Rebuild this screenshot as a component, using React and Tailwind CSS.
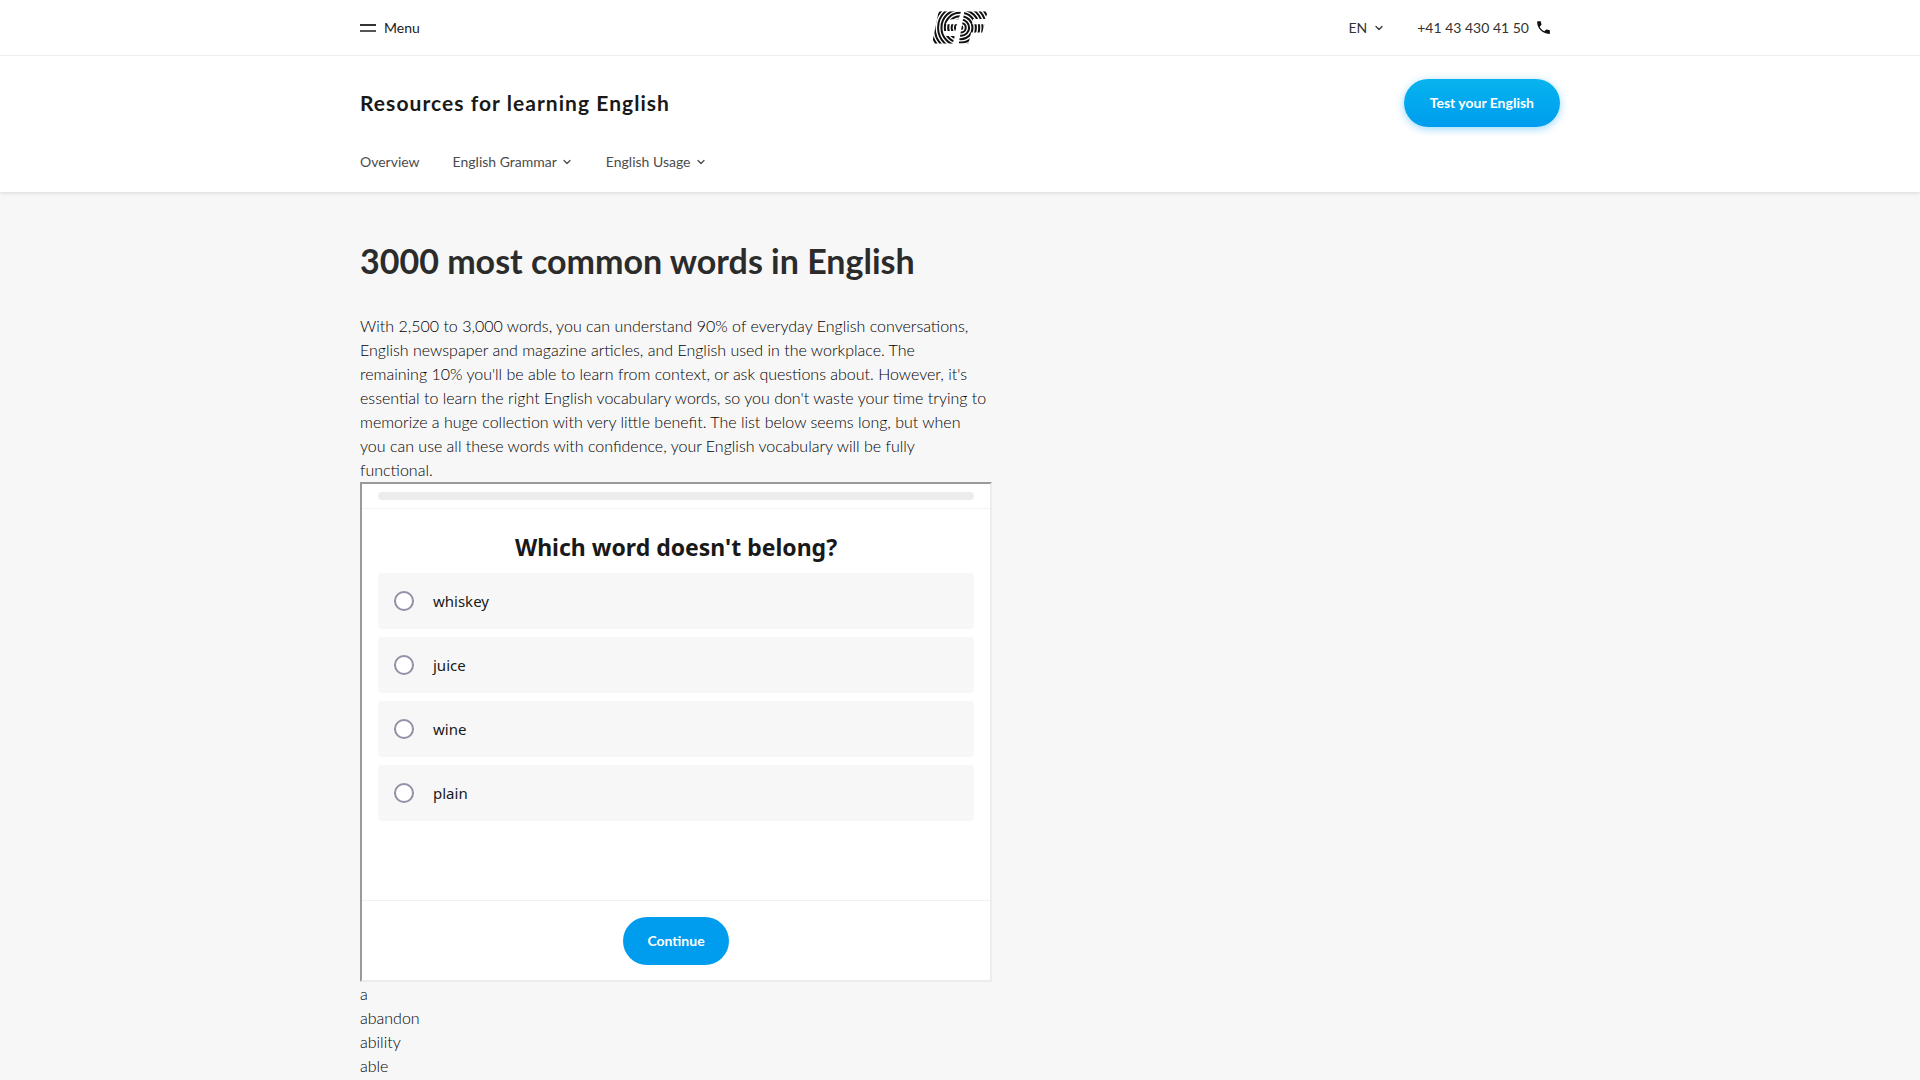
import { ChevronDown } from "lucide-react";
import { MdPhone } from "react-icons/md";

const OPTIONS = ["whiskey", "juice", "wine", "plain"];
const WORDS = ["a", "abandon", "ability", "able"];
const RINGS = [4, 14, 24, 34, 44, 54, 64, 74, 84];

function Logo() {
  return (
    <svg viewBox="38 33 166 97" className="h-[33px] w-[56px]" aria-hidden="true">
      <defs>
        <clipPath id="letter-e">
          <path d="M58 33H124L117 57H100Q84 57 79 72H113L107 92H73Q70 107 82 107H106L99 130H38Z" />
        </clipPath>
        <clipPath id="letter-f">
          <path d="M134 33H204L196 56H160L157 72H194L187 96H154L146 130H117Z" />
        </clipPath>
      </defs>
      <g fill="none" stroke="#111" strokeWidth="6">
        <g clipPath="url(#letter-e)">
          {RINGS.map((r) => (
            <circle key={r} cx="120" cy="82" r={r} />
          ))}
        </g>
        <g clipPath="url(#letter-f)">
          {RINGS.map((r) => (
            <circle key={r} cx="124" cy="82" r={r} />
          ))}
        </g>
      </g>
    </svg>
  );
}

function NavLink({ children, menu }) {
  return (
    <a href="#" className="flex items-center gap-1">
      {children}
      {menu && <ChevronDown size={12} strokeWidth={2.5} />}
    </a>
  );
}

function TopBar() {
  return (
    <div className="border-b border-[#efefef]">
      <div className="mx-auto grid h-[55px] max-w-[1200px] grid-cols-3 items-center text-sm text-[#191919]">
        <button type="button" className="flex items-center gap-2 justify-self-start">
          <span className="flex w-4 flex-col gap-1">
            <span className="h-0.5 bg-[#333]" />
            <span className="h-0.5 bg-[#555]" />
          </span>
          Menu
        </button>
        <a href="#" aria-label="EF" className="justify-self-center">
          <Logo />
        </a>
        <div className="flex items-center gap-8 justify-self-end pr-2 text-[#333]">
          <button type="button" className="flex items-center gap-1.5">
            EN
            <ChevronDown size={12} strokeWidth={2.5} />
          </button>
          <a href="#" className="flex items-center gap-1.5">
            +41 43 430 41 50
            <MdPhone size={17} color="#111" />
          </a>
        </div>
      </div>
    </div>
  );
}

function SectionHeader() {
  return (
    <div className="mx-auto max-w-[1200px] pt-[23px]">
      <div className="flex h-12 items-center justify-between">
        <p className="text-[21px] font-bold tracking-wider text-[#191919]">
          Resources for learning English
        </p>
        <button
          type="button"
          className="h-12 rounded-full bg-linear-to-b from-[#08b4ee] to-[#009cee] px-[26px] text-sm font-bold text-white shadow-[0_2px_8px_rgba(0,156,238,0.4)]"
        >
          Test your English
        </button>
      </div>
      <nav className="flex h-[65px] items-center gap-[33px] pt-1 text-sm text-[#4c4c4c]">
        <NavLink>Overview</NavLink>
        <NavLink menu>English Grammar</NavLink>
        <NavLink menu>English Usage</NavLink>
      </nav>
    </div>
  );
}

function Quiz() {
  return (
    <form className="flex h-[500px] flex-col border-2 border-t-[#9a9a9a] border-r-[#ededed] border-b-[#ededed] border-l-[#9a9a9a] bg-white font-normal text-[#191919]">
      <div className="border-b border-[#f3f3f3] px-4 py-2">
        <div className="h-2 rounded-full bg-[#ececec]" />
      </div>
      <div
        role="radiogroup"
        aria-labelledby="question"
        className="flex flex-1 flex-col gap-2 px-4 pt-5 font-['Noto_Sans',sans-serif]"
      >
        <h2 id="question" className="text-center text-[23px] leading-9 font-bold">
          Which word doesn't belong?
        </h2>
        {OPTIONS.map((word) => (
          <label
            key={word}
            className="flex h-14 items-center gap-[19px] rounded bg-[#f7f7f7] px-4 text-[15px]"
          >
            <input
              type="radio"
              name="answer"
              className="h-5 w-5 appearance-none rounded-full border-2 border-[#9090a7] bg-white"
            />
            {word}
          </label>
        ))}
      </div>
      <div className="flex justify-center border-t border-[#f0f0f5] pt-4 pb-[15px]">
        <button type="button" className="h-12 rounded-full bg-[#009cee] px-6 text-sm font-bold text-white">
          Continue
        </button>
      </div>
    </form>
  );
}

export default function App() {
  return (
    <div className="h-screen overflow-hidden bg-[#f7f7f7] font-['Lato','Liberation_Sans',sans-serif]">
      <header className="bg-white shadow-[0_1px_4px_rgba(0,0,0,0.12)]">
        <TopBar />
        <SectionHeader />
      </header>
      <main className="mx-auto max-w-[1200px] pt-[49px] text-black">
        <h1 className="text-[34px] leading-10 font-bold text-[#2b2b2b]">
          3000 most common words in English
        </h1>
        <div className="mt-[33px] max-w-[632px] leading-6 font-light">
          <p>
            With 2,500 to 3,000 words, you can understand 90% of everyday English conversations,
            English newspaper and magazine articles, and English used in the workplace. The
            <br />
            remaining 10% you'll be able to learn from context, or ask questions about. However, it's
            <br />
            essential to learn the right English vocabulary words, so you don't waste your time
            trying to
            <br />
            memorize a huge collection with very little benefit. The list below seems long, but when
            <br />
            you can use all these words with confidence, your English vocabulary will be fully
            <br />
            functional.
          </p>
          <Quiz />
          {WORDS.map((word) => (
            <p key={word}>{word}</p>
          ))}
        </div>
      </main>
    </div>
  );
}
